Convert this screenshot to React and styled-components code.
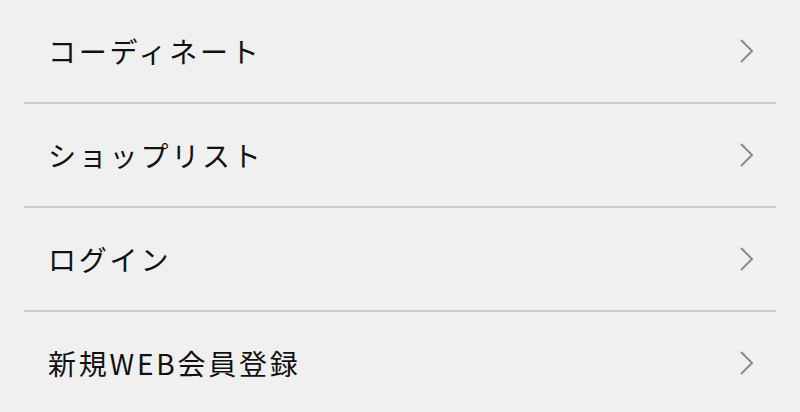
import React from "react"
import styled, { createGlobalStyle } from "styled-components"

const GlobalStyle = createGlobalStyle`
  html, body {
    margin: 0;
    padding: 0;
    background: #f0f0f0;
  }
  body {
    font-family: "Noto Sans CJK JP", "Noto Sans", sans-serif;
    color: #111;
  }
`

const Menu = styled.ul`
  list-style: none;
  margin: 0 24px;
  padding: 0;
`

const Item = styled.li`
  display: flex;
  align-items: center;
  justify-content: space-between;
  height: 102px;
  padding: 0 21px 0 24px;
  border-bottom: 2px solid #c8c8c8;

  &:last-child {
    border-bottom: none;
  }
`

const Label = styled.span`
  font-size: 28px;
  letter-spacing: 2.8px;
  line-height: 1;
`

const Chevron = () => (
  <svg width="16" height="26" viewBox="0 0 16 26" fill="none">
    <path d="M2 2 L13 13 L2 24" stroke="#8c8c8c" strokeWidth="2" />
  </svg>
)

const items = ["コーディネート", "ショップリスト", "ログイン", "新規WEB会員登録"]

const App = () => (
  <>
    <GlobalStyle />
    <Menu>
      {items.map(label => (
        <Item key={label}>
          <Label>{label}</Label>
          <Chevron />
        </Item>
      ))}
    </Menu>
  </>
)

export default App
